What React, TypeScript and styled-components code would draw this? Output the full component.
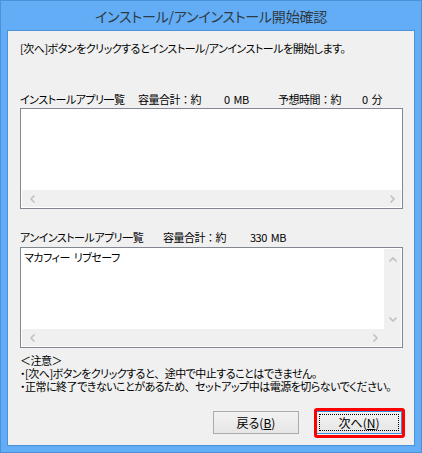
import React from 'react';
import styled, { createGlobalStyle } from 'styled-components';

const GlobalStyle = createGlobalStyle`
    html, body {
        margin: 0;
        padding: 0;
        background: #62adf6;
    }
    * {
        box-sizing: border-box;
    }
`;

const uiFont = `"Noto Sans CJK JP", "Noto Sans", sans-serif`;

const Window = styled.div`
    width: 422px;
    height: 453px;
    background: #62adf6;
    border: 1px solid #4b91da;
    display: flex;
    flex-direction: column;
    font-family: ${uiFont};
    font-feature-settings: "palt";
    color: #000;
`;

const TitleBar = styled.div`
    height: 29px;
    display: flex;
    align-items: center;
    justify-content: center;
    font-size: 14px;
    letter-spacing: -0.2px;
    color: #303a44;
    padding-top: 1px;
`;

const Client = styled.div`
    flex: 1;
    margin: 0 6px 6px 6px;
    border: 1px solid #4c92d8;
    background: #f0f0f0;
    display: flex;
    flex-direction: column;
    padding: 10px 11px 11px 12px;
    font-size: 11px;
    letter-spacing: -0.5px;
    word-spacing: 2px;
`;

// full-width punctuation (colon, comma) as in the original bitmap font
const Full = styled.span`
    font-feature-settings: normal;
`;

const Line = styled.div<{ $top?: number }>`
    line-height: 14px;
    height: 14px;
    white-space: nowrap;
    margin-top: ${({ $top }) => $top ?? 0}px;
    display: flex;
`;

const Seg = styled.span<{ $w?: number }>`
    display: inline-block;
    width: ${({ $w }) => ($w ? `${$w}px` : 'auto')};
    flex: none;
`;

const ListBox = styled.div<{ $top: number }>`
    margin-top: ${({ $top }) => $top}px;
    height: 101px;
    border: 1px solid #828790;
    background: #fff;
    padding: 1px;
    display: grid;
    grid-template-columns: 1fr 17px;
    grid-template-rows: 1fr 17px;
`;

const ListContent = styled.div<{ $full?: boolean }>`
    grid-column: ${({ $full }) => ($full ? '1 / 3' : '1 / 2')};
    padding: 1px 2px;
    line-height: 14px;
`;

const ScrollTrack = styled.div<{ $dir: 'h' | 'v'; $full?: boolean }>`
    background: #f0f0f0;
    display: flex;
    flex-direction: ${({ $dir }) => ($dir === 'h' ? 'row' : 'column')};
    align-items: center;
    justify-content: space-between;
    padding: ${({ $dir }) => ($dir === 'h' ? '0 5px 0 7px' : '7px 0 6px 0')};
    grid-column: ${({ $dir, $full }) => ($dir === 'v' ? '2 / 3' : $full ? '1 / 3' : '1 / 2')};
    grid-row: ${({ $dir }) => ($dir === 'v' ? '1 / 2' : '2 / 3')};
`;

const Corner = styled.div`
    background: #f0f0f0;
`;

const Arrow: React.FC<{ dir: 'left' | 'right' | 'up' | 'down' }> = ({ dir }) => {
    const rot = { left: 0, right: 180, up: 90, down: 270 }[dir];
    return (
        <svg width="8" height="8" viewBox="0 0 8 8" style={{ transform: `rotate(${rot}deg)` }}>
            <path d="M5.5 0.5 L2 4 L5.5 7.5" fill="none" stroke="#c2c2c2" strokeWidth="1.6" />
        </svg>
    );
};

const Notes = styled.div`
    margin-top: 6px;
    white-space: nowrap;
`;

const NoteLine = styled.div`
    height: 13px;
    line-height: 13px;
`;

const ButtonRow = styled.div`
    margin-top: auto;
    display: flex;
    justify-content: flex-end;
    gap: 17px;
    padding-right: 1px;
`;

const Button = styled.button<{ $focused?: boolean }>`
    position: relative;
    width: 86px;
    height: 23px;
    font-family: ${uiFont};
    font-feature-settings: "palt";
    font-size: 12px;
    color: #000;
    border: 1px solid ${({ $focused }) => ($focused ? '#3c8fe0' : '#acacac')};
    background: linear-gradient(#f2f2f2, #e6e6e6);
    padding: 0;
    display: flex;
    align-items: center;
    justify-content: center;

    &::before {
        content: '';
        display: ${({ $focused }) => ($focused ? 'block' : 'none')};
        position: absolute;
        inset: 2px;
        border: 1px dotted #000;
    }

    &::after {
        content: '';
        display: ${({ $focused }) => ($focused ? 'block' : 'none')};
        position: absolute;
        top: -4px;
        left: -3px;
        right: -4px;
        bottom: -5px;
        border: 3px solid #ff0000;
        border-radius: 3px;
    }

    u {
        text-decoration: underline;
        text-underline-offset: 1px;
    }
`;

export default function App() {
    return (
        <>
            <GlobalStyle />
            <Window>
                <TitleBar>インストール/アンインストール開始確認</TitleBar>
                <Client>
                    <Line>[次へ]ボタンをクリックするとインストール/アンインストールを開始します。</Line>

                    <Line $top={37}>
                        <Seg $w={118}>インストールアプリ一覧</Seg>
                        <Seg $w={86}>容量合計<Full>：</Full>約</Seg>
                        <Seg $w={54}>0 MB</Seg>
                        <Seg $w={84}>予想時間<Full>：</Full>約</Seg>
                        <Seg>0 分</Seg>
                    </Line>
                    <ListBox $top={2}>
                        <ListContent $full />
                        <ScrollTrack $dir="h" $full>
                            <Arrow dir="left" />
                            <Arrow dir="right" />
                        </ScrollTrack>
                    </ListBox>

                    <Line $top={21}>
                        <Seg $w={143}>アンインストールアプリ一覧</Seg>
                        <Seg $w={87}>容量合計<Full>：</Full>約</Seg>
                        <Seg>330 MB</Seg>
                    </Line>
                    <ListBox $top={3}>
                        <ListContent>マカフィー リブセーフ</ListContent>
                        <ScrollTrack $dir="v">
                            <Arrow dir="up" />
                            <Arrow dir="down" />
                        </ScrollTrack>
                        <ScrollTrack $dir="h">
                            <Arrow dir="left" />
                            <Arrow dir="right" />
                        </ScrollTrack>
                        <Corner />
                    </ListBox>

                    <Notes>
                        <NoteLine>＜注意＞</NoteLine>
                        <NoteLine>・[次へ]ボタンをクリックすると<Full>、</Full>途中で中止することはできません。</NoteLine>
                        <NoteLine>・正常に終了できないことがあるため<Full>、</Full>セットアップ中は電源を切らないでください。</NoteLine>
                    </Notes>

                    <ButtonRow>
                        <Button>戻る(<u>B</u>)</Button>
                        <Button $focused>次へ(<u>N</u>)</Button>
                    </ButtonRow>
                </Client>
            </Window>
        </>
    );
}
